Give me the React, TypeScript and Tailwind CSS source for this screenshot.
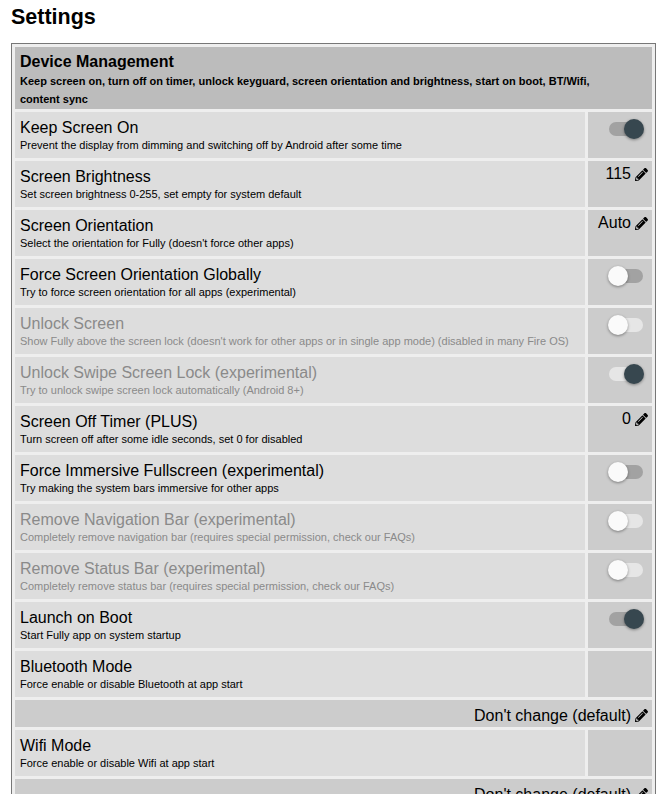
import { FaPencilAlt } from "react-icons/fa";

type Control =
  | { kind: "toggle"; on: boolean }
  | { kind: "value"; value: string }
  | { kind: "select"; value: string };

interface Setting {
  title: string;
  desc: string;
  disabled?: boolean;
  control: Control;
}

const settings: Setting[] = [
  {
    title: "Keep Screen On",
    desc: "Prevent the display from dimming and switching off by Android after some time",
    control: { kind: "toggle", on: true },
  },
  {
    title: "Screen Brightness",
    desc: "Set screen brightness 0-255, set empty for system default",
    control: { kind: "value", value: "115" },
  },
  {
    title: "Screen Orientation",
    desc: "Select the orientation for Fully (doesn't force other apps)",
    control: { kind: "value", value: "Auto" },
  },
  {
    title: "Force Screen Orientation Globally",
    desc: "Try to force screen orientation for all apps (experimental)",
    control: { kind: "toggle", on: false },
  },
  {
    title: "Unlock Screen",
    desc: "Show Fully above the screen lock (doesn't work for other apps or in single app mode) (disabled in many Fire OS)",
    disabled: true,
    control: { kind: "toggle", on: false },
  },
  {
    title: "Unlock Swipe Screen Lock (experimental)",
    desc: "Try to unlock swipe screen lock automatically (Android 8+)",
    disabled: true,
    control: { kind: "toggle", on: true },
  },
  {
    title: "Screen Off Timer (PLUS)",
    desc: "Turn screen off after some idle seconds, set 0 for disabled",
    control: { kind: "value", value: "0" },
  },
  {
    title: "Force Immersive Fullscreen (experimental)",
    desc: "Try making the system bars immersive for other apps",
    control: { kind: "toggle", on: false },
  },
  {
    title: "Remove Navigation Bar (experimental)",
    desc: "Completely remove navigation bar (requires special permission, check our FAQs)",
    disabled: true,
    control: { kind: "toggle", on: false },
  },
  {
    title: "Remove Status Bar (experimental)",
    desc: "Completely remove status bar (requires special permission, check our FAQs)",
    disabled: true,
    control: { kind: "toggle", on: false },
  },
  {
    title: "Launch on Boot",
    desc: "Start Fully app on system startup",
    control: { kind: "toggle", on: true },
  },
  {
    title: "Bluetooth Mode",
    desc: "Force enable or disable Bluetooth at app start",
    control: { kind: "select", value: "Don't change (default)" },
  },
  {
    title: "Wifi Mode",
    desc: "Force enable or disable Wifi at app start",
    control: { kind: "select", value: "Don't change (default)" },
  },
];

function Toggle({ on, disabled }: { on: boolean; disabled?: boolean }) {
  return (
    <div className="relative h-[14px] w-[34px]">
      <div
        className={`absolute inset-0 rounded-full ${disabled ? "bg-[#e6e6e6]" : "bg-[#a2a2a2]"}`}
      />
      <div
        className={`absolute top-[-3px] h-[20px] w-[20px] rounded-full shadow-[0_1px_3px_rgba(0,0,0,0.4)] ${
          on ? "left-[15px] bg-[#37474f]" : "left-[-1px] bg-[#fafafa]"
        }`}
      />
    </div>
  );
}

function Value({ value }: { value: string }) {
  return (
    <span className="flex items-center gap-[4px] text-[16px] leading-[18px] text-black">
      {value}
      <FaPencilAlt size={13} />
    </span>
  );
}

function Row({ s }: { s: Setting }) {
  const dim = s.disabled ? "text-[#8a8a8a]" : "text-black";
  return (
    <>
      <div className="bg-[#dddddd] px-[5px] pt-[6px] pb-[4px]">
        <div className={`text-[16px] leading-[19px] ${dim}`}>{s.title}</div>
        <div className={`text-[11px] leading-[17px] ${dim}`}>{s.desc}</div>
      </div>
      <div className="flex justify-end bg-[#cccccc]">
        {s.control.kind === "toggle" && (
          <div className="pt-[10px] pr-[9px]">
            <Toggle on={s.control.on} disabled={s.disabled} />
          </div>
        )}
        {s.control.kind === "value" && (
          <div className="pt-[4px] pr-[4px]">
            <Value value={s.control.value} />
          </div>
        )}
      </div>
      {s.control.kind === "select" && (
        <div className="col-span-2 flex h-[27px] justify-end bg-[#cccccc] pt-[4px] pr-[4px]">
          <Value value={s.control.value} />
        </div>
      )}
    </>
  );
}

export default function App() {
  return (
    <div className="min-h-screen bg-white font-['Liberation_Sans',Arial,sans-serif]">
      <div className="px-[11px] pt-[1px] pb-[10px] text-[21.5px] font-bold text-black">Settings</div>
      <div className="ml-[11px] w-[645px] border border-[#777777] bg-[#eeeeee] p-[3px]">
        <div className="grid grid-cols-[1fr_64px] gap-[3px]">
          <div className="col-span-2 bg-[#bcbcbc] px-[5px] pt-[5px] pb-[1px] text-black">
            <div className="text-[16px] font-bold leading-[20px]">Device Management</div>
            <div className="text-[11px] font-bold leading-[18px]">
              Keep screen on, turn off on timer, unlock keyguard, screen orientation and brightness, start on
              boot, BT/Wifi,
              <br />
              content sync
            </div>
          </div>
          {settings.map((s) => (
            <Row key={s.title} s={s} />
          ))}
        </div>
      </div>
    </div>
  );
}
